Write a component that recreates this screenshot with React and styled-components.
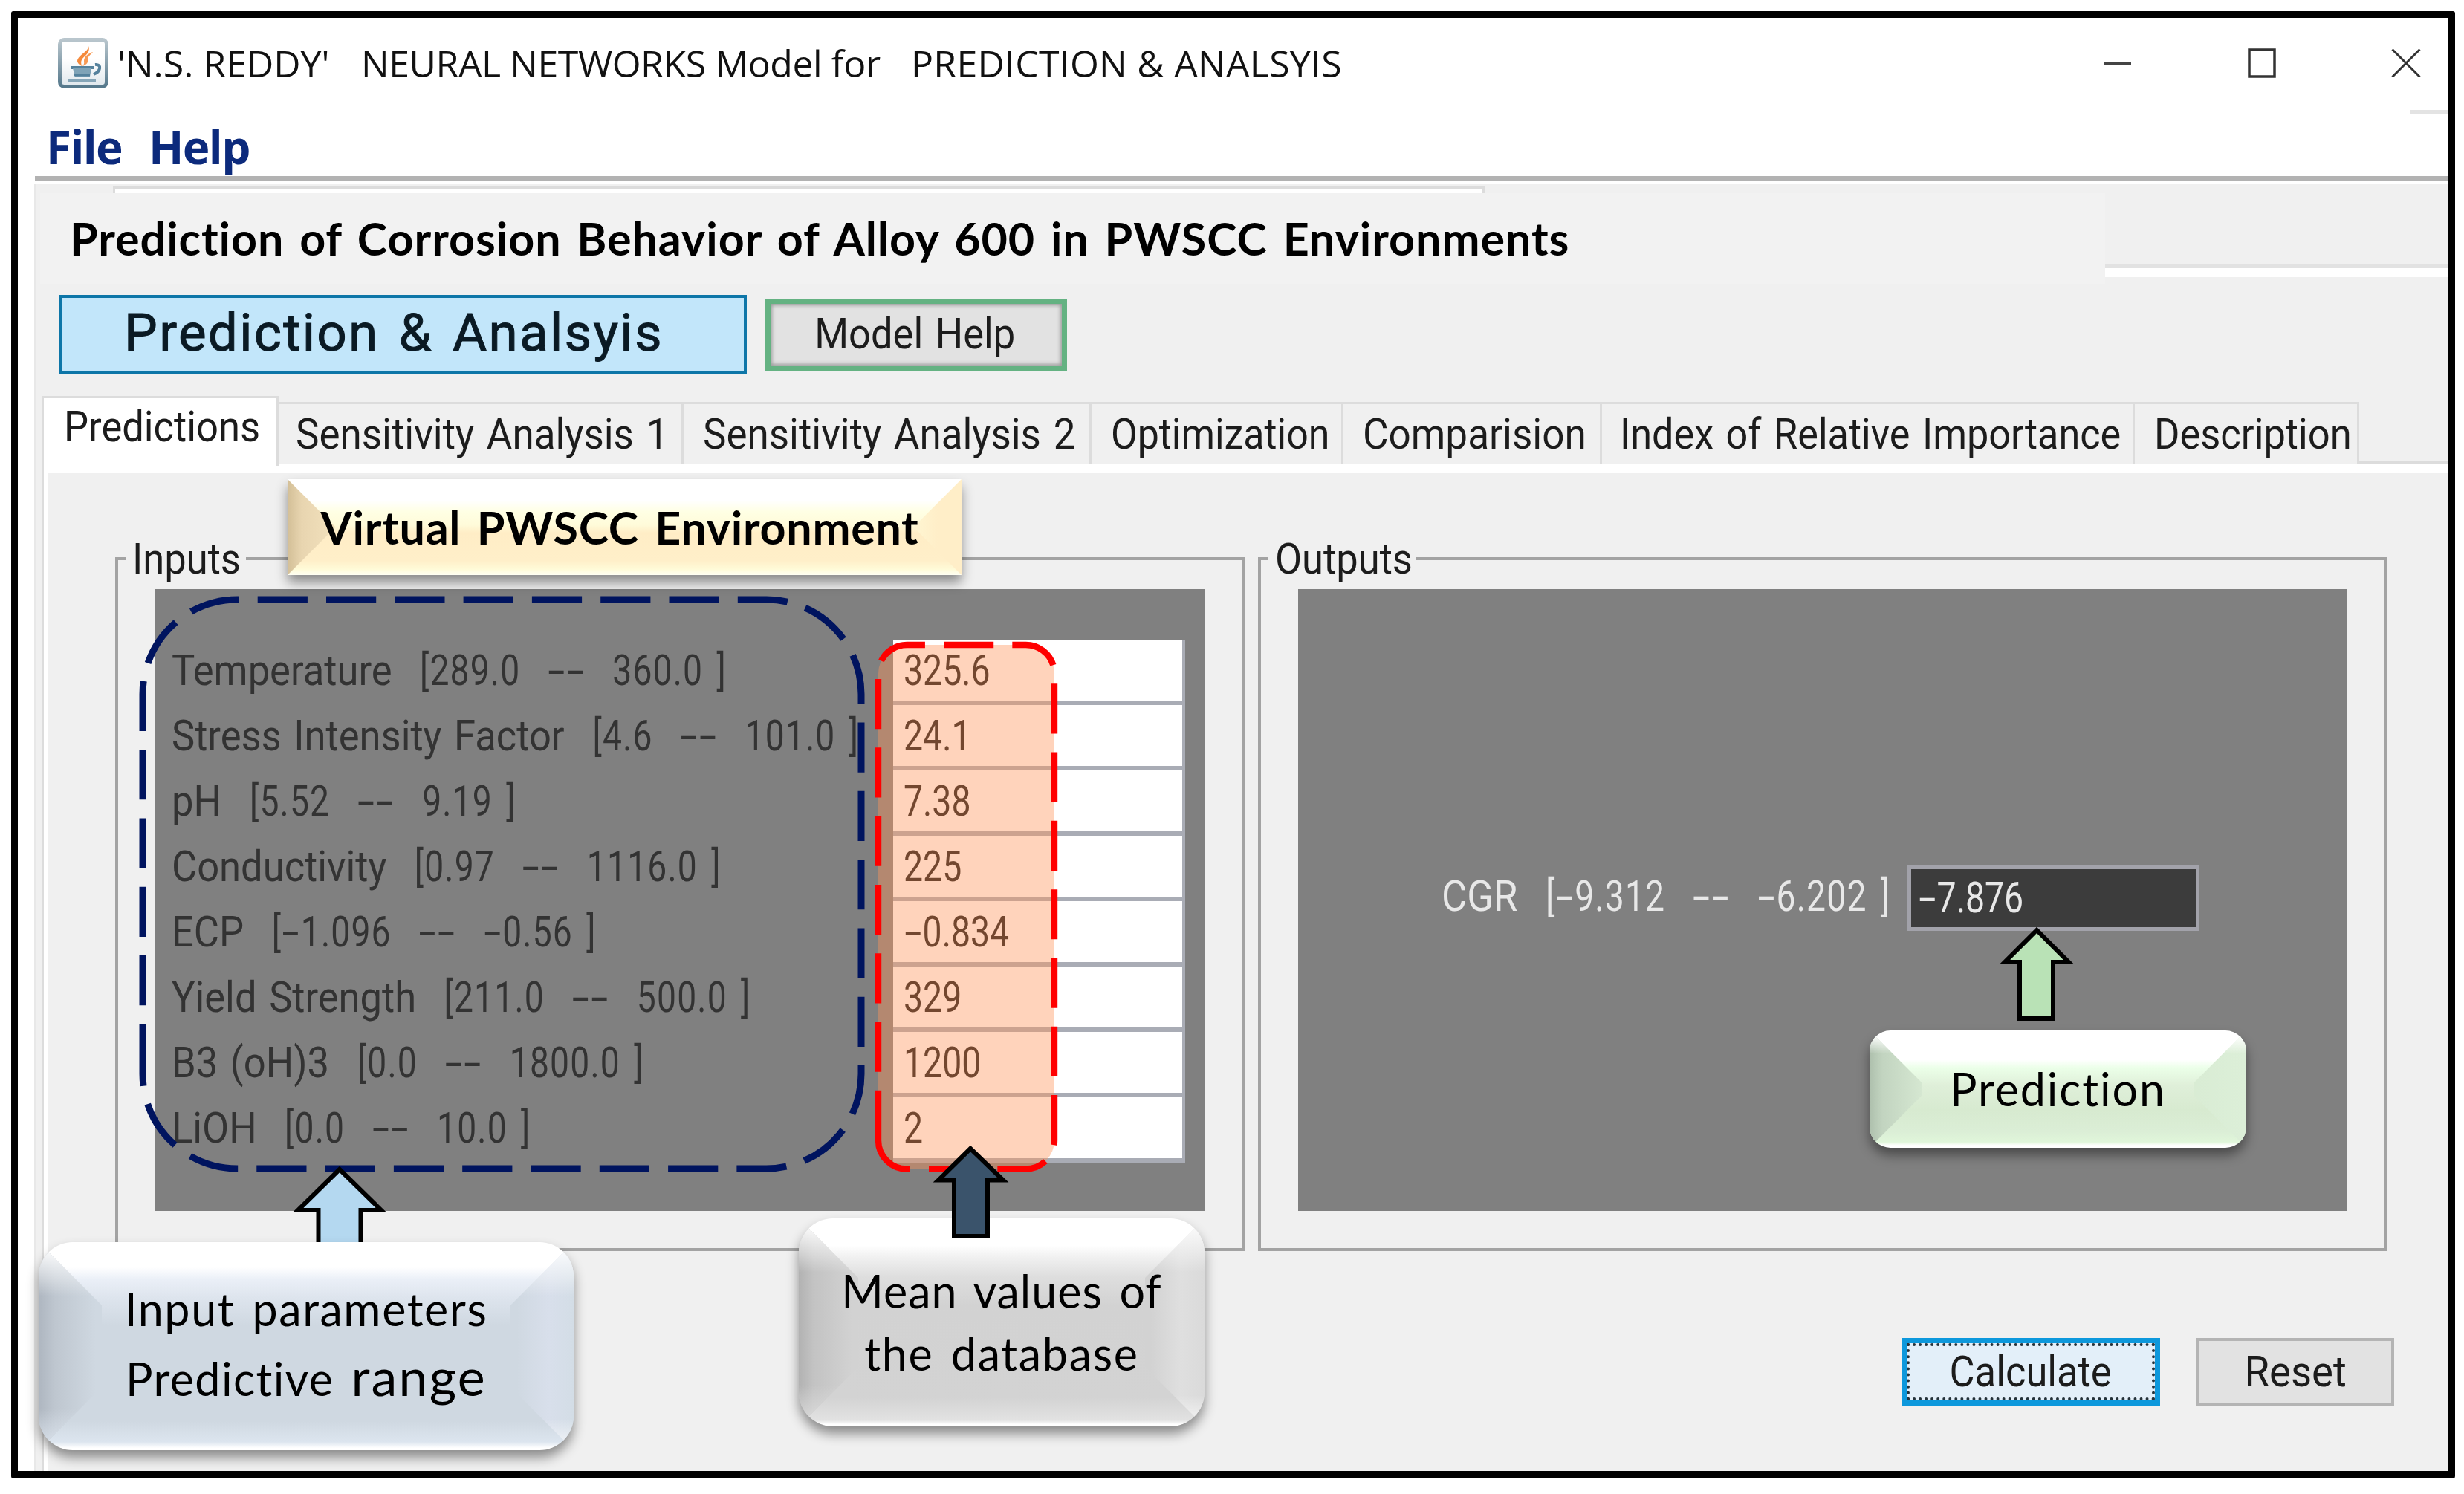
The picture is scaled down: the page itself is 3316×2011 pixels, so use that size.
import React from 'react'
import styled, { createGlobalStyle } from 'styled-components'

const GlobalStyle = createGlobalStyle`
  * {
    box-sizing: border-box;
  }
  body {
    margin: 0;
    background: #fff;
  }
`
const Page = styled.div`
  position: relative;
  width: 3316px;
  height: 2011px;
  padding: 15px 12px 21px 15px;
  overflow: hidden;
`
const Frame = styled.main`
  display: flex;
  flex-direction: column;
  height: 1975px;
  border: 9px solid #000;
  border-bottom-width: 10px;
  border-radius: 3px;
  background: #fff;
`

/* title bar */
const TitleBar = styled.header`
  display: flex;
  align-items: center;
  height: 121px;
  padding: 0 37px 0 54px;
`
const Title = styled.h1`
  display: flex;
  margin: 0 auto 0 12px;
  color: #111;
  font: 400 50px/60px 'Open Sans', sans-serif;
  white-space: pre;
`
const TitlePart = styled.span`
  width: ${(props) => props.$width}px;
  letter-spacing: ${(props) => props.$spacing || 0}px;
`
const Controls = styled.div`
  display: flex;
  gap: 154px;
`
const Sliver = styled.div`
  width: 52px;
  height: 6px;
  margin: 3px 0 0 auto;
  background: #e3e3e3;
`
const MenuBar = styled.nav`
  display: flex;
  height: 83px;
  margin-left: 23px;
  padding: 4px 0 0 15px;
  color: #0c2a7c;
  font: 700 62px/79px 'Open Sans', sans-serif;
  letter-spacing: -1.6px;
`
const MenuItem = styled.span`
  width: 138px;
`
const Rule = styled.div`
  height: 6px;
  margin: 0 0 5px 23px;
  background: #b2b2b2;
`

/* window body */
const Body = styled.section`
  flex: 1;
  margin-left: 22px;
  padding-top: 2px;
  border-left: 3px solid #e8e8e8;
  background: #f0f0f0;
`
const HiddenField = styled.div`
  width: 1846px;
  height: 10px;
  margin-left: 103px;
  border: solid #dcdcdc;
  border-width: 4px 3px 0;
  background: #fff;
`
const HeadingRow = styled.div`
  display: flex;
  height: 122px;
  margin-left: 5px;
`
const Heading = styled.h2`
  width: 2779px;
  margin: 0;
  padding-left: 40px;
  background: #f2f2f2;
  color: #000;
  font: 700 61px/122px Lato, sans-serif;
  letter-spacing: 0.95px;
  word-spacing: 5px;
`
const HiddenPane = styled.div`
  flex: 1;
  height: 18px;
  margin-top: 95px;
  border-top: 6px solid #e2e2e2;
  background: #fff;
`
const Toolbar = styled.div`
  display: flex;
  gap: 25px;
  padding: 15px 0 30px 30px;
`
const ModeButton = styled.button`
  width: 926px;
  height: 106px;
  padding: 0 24px 4px 0;
  border: 4px solid #0d76a8;
  background: #c2e6fa;
  color: #0a1a24;
  font: 400 71px/90px Roboto, sans-serif;
  letter-spacing: 2.3px;
  word-spacing: 6px;
  -webkit-text-stroke: 1px #0a1a24;
`
const HelpButton = styled.button`
  width: 406px;
  height: 97px;
  margin-top: 5px;
  padding: 0 4px 4px 0;
  border: 7px solid #64b282;
  background: #e2e2e2;
  box-shadow: inset 0 0 5px 2px #9a9a9a;
`
const Text = styled.span`
  display: inline-block;
  color: ${(props) => props.$color || '#1c1c1c'};
  font: 400 58px/60px Roboto, sans-serif;
  white-space: pre;
  word-spacing: 4px;
  transform: scaleX(${(props) => props.$scale || 0.905});
  transform-origin: ${(props) => props.$origin || 'left'};
`

const Tabs = styled.div`
  display: flex;
  align-items: flex-end;
  height: 91px;
  margin: 0 0 -3px 7px;
`
const Tab = styled.div`
  position: relative;
  width: ${(props) => props.$width}px;
  height: ${(props) => (props.$selected ? 94 : 83)}px;
  margin-bottom: ${(props) => (props.$selected ? -3 : 0)}px;
  padding: ${(props) => (props.$selected ? 8 : 10)}px 0 0 ${(props) => props.$pad}px;
  border: solid #dcdcdc;
  border-width: 3px 3px 0 ${(props) => (props.$selected ? 3 : 0)}px;
  background: ${(props) => (props.$selected ? '#fff' : '#f0f0f0')};
`
const TabPane = styled.div`
  height: 1359px;
  margin-left: 7px;
  padding: 13px 0 0 6px;
  border: solid #dcdcdc;
  border-width: 3px 0 0 3px;
  background: #fff;
`
const PaneContent = styled.div`
  height: 100%;
  padding: 85px 73px 0 90px;
  background: #f0f0f0;
`
const Groups = styled.div`
  display: flex;
  gap: 18px;
`
const Group = styled.fieldset`
  width: ${(props) => props.$width}px;
  height: 962px;
  min-width: 0;
  margin: 0;
  padding: 11px 0 0 50px;
  border: 4px solid #a3a3a3;
  flex-shrink: 0;
`
const Legend = styled.legend`
  width: ${(props) => props.$width}px;
  height: 60px;
  margin-left: -40px;
  padding: 0 0 0 9px;
`
const Panel = styled.div`
  display: flex;
  flex-direction: column;
  width: ${(props) => props.$width}px;
  height: 837px;
  background: #808080;
`
const InputPanel = styled(Panel)`
  padding: 68px 0 0 22px;
`
const OutputPanel = styled(Panel)`
  padding: 372px 0 0 193px;
`
const Row = styled.div`
  display: flex;
  height: 88px;
`
const Label = styled.div`
  width: ${(props) => props.$width}px;
  padding-top: 11px;
`
const Range = styled.span`
  display: inline-block;
  margin-left: 5px;
  letter-spacing: 1.5px;
  word-spacing: 7px;
  transform: scaleX(0.88);
  transform-origin: left;
`
const Dash = styled.span`
  display: inline-block;
  width: 32px;
  text-align: center;
  transform: scaleX(1.8);
`
const Field = styled.div`
  width: 393px;
  height: 88px;
  padding: 11px 0 0 14px;
  border: solid #a9acb5;
  border-width: 0 4px 6px 0;
  background: #fff;
`
const ResultField = styled.div`
  width: 393px;
  height: 88px;
  padding: 8px 0 0 9px;
  border: 5px solid #a2a2aa;
  background: #3c3c3c;
`
const Actions = styled.div`
  display: flex;
  justify-content: flex-end;
  gap: 49px;
  margin-top: 117px;
`
const ActionButton = styled.button`
  position: relative;
  width: ${(props) => props.$width}px;
  height: 91px;
  padding: 0 0 2px;
  border: 4px solid #b4b4b4;
  background: #e2e2e2;
`
const PrimaryButton = styled(ActionButton)`
  border: 7px solid #0d98dc;
  background: #e3eff9;

  &::after {
    content: '';
    position: absolute;
    inset: 0;
    border: 4px dotted #25323a;
  }
`

/* annotations drawn over the window */
const Overlay = styled.svg`
  position: absolute;
  inset: 0;
`
const Shadow = styled.div`
  position: absolute;
  inset: 0;
  filter: drop-shadow(0 10px 8px rgba(0, 0, 0, 0.42));
`
const Callout = styled.div`
  position: absolute;
  left: ${(props) => props.$x}px;
  top: ${(props) => props.$y}px;
  display: flex;
  flex-direction: column;
  align-items: center;
  justify-content: center;
  width: ${(props) => props.$w}px;
  height: ${(props) => props.$h}px;
  border-radius: ${(props) => props.$r}px;
  overflow: hidden;
  background: ${(props) => props.$face};

  &::before,
  &::after {
    content: '';
    position: absolute;
    top: 0;
    bottom: 0;
    width: ${(props) => props.$bevel}px;
  }
  &::before {
    left: 0;
    background: ${(props) => props.$left};
    clip-path: polygon(0 0, 100% ${(props) => props.$bevel}px, 100% calc(100% - ${(props) => props.$bevel}px), 0 100%);
  }
  &::after {
    right: 0;
    background: ${(props) => props.$right};
    clip-path: polygon(100% 0, 0 ${(props) => props.$bevel}px, 0 calc(100% - ${(props) => props.$bevel}px), 100% 100%);
  }
`
const Note = styled.span`
  position: relative;
  z-index: 1;
  margin: ${(props) => -(props.$lift || 0)}px 0 ${(props) => props.$lift || 0}px;
  padding: 0 ${(props) => props.$shift || 0}px 0 0;
  color: #000;
  font: ${(props) => (props.$bold ? 700 : 400)} 61px/${(props) => props.$line || 84}px Lato, sans-serif;
  letter-spacing: ${(props) => props.$spacing}px;
  word-spacing: 6px;
  white-space: nowrap;
`
const Larger = styled.span`
  font-size: 70px;
  letter-spacing: 2.2px;
`

const tabs = [
  { name: 'Predictions', width: 319, pad: 27, selected: true },
  { name: 'Sensitivity Analysis 1', width: 545, pad: 23, scale: 0.913 },
  { name: 'Sensitivity Analysis 2', width: 549, pad: 26, scale: 0.913 },
  { name: 'Optimization', width: 339, pad: 26, scale: 0.895 },
  { name: 'Comparision', width: 348, pad: 26, scale: 0.915 },
  { name: 'Index of Relative Importance', width: 717, pad: 24, scale: 0.9 },
  { name: 'Description', width: 302, pad: 26 },
]
const inputs = [
  { name: 'Temperature', range: '[289.0  --  360.0 ]', value: '325.6' },
  { name: 'Stress Intensity Factor', range: '[4.6  --  101.0 ]', value: '24.1' },
  { name: 'pH', range: '[5.52  --  9.19 ]', value: '7.38' },
  { name: 'Conductivity', range: '[0.97  --  1116.0 ]', value: '225' },
  { name: 'ECP', range: '[-1.096  --  -0.56 ]', value: '-0.834' },
  { name: 'Yield Strength', range: '[211.0  --  500.0 ]', value: '329' },
  { name: 'B3 (oH)3', range: '[0.0  --  1800.0 ]', value: '1200' },
  { name: 'LiOH', range: '[0.0  --  10.0 ]', value: '2' },
]

// the hyphen is as wide as a digit in this UI font
function Digits({ children }) {
  return children
    .split(/(-)/)
    .map((part, i) => (part === '-' ? <Dash key={i}>-</Dash> : part))
}

function RangeLabel({ name, range, color }) {
  return (
    <Text $color={color}>
      {name + '  '}
      <Range>
        <Digits>{range}</Digits>
      </Range>
    </Text>
  )
}

function JavaIcon() {
  return (
    <svg width='68' height='68' viewBox='0 0 68 68' fill='none'>
      <defs>
        <linearGradient id='edge' x1='0' y1='0' x2='0' y2='1'>
          <stop offset='0' stopColor='#b9c6cd' />
          <stop offset='1' stopColor='#56798c' />
        </linearGradient>
        <linearGradient id='paper' x1='0' y1='0' x2='0' y2='1'>
          <stop offset='0.4' stopColor='#fff' />
          <stop offset='1' stopColor='#dfe7ec' />
        </linearGradient>
      </defs>
      <rect x='2.5' y='2.5' width='63' height='63' rx='6' fill='url(#paper)' stroke='url(#edge)' strokeWidth='5' />
      <path d='M41 11c1 7-14 12-15 20 0 3 3 5 6 7-2-7 0-10 5-14 4-4 6-8 4-13z' fill='#f58a3c' />
      <path d='M47 19c-6 2-12 6-12 12 0 2 1 4-2 7 6-2 8-5 7-9 0-4 4-6 7-10z' fill='#f79a55' />
      <path d='M17 40h32' stroke='#54819c' strokeWidth='4' />
      <path d='M50 36c9-1 8 9-2 13' stroke='#54819c' strokeWidth='4' />
      <path d='M20 41h25l-2 11H23z' fill='#7fa3b7' />
      <path d='M22 50h21' stroke='#54819c' strokeWidth='3' />
      <path d='M14 58h37' stroke='#86a6b8' strokeWidth='4' />
    </svg>
  )
}

function WindowControls() {
  return (
    <Controls>
      <svg width='40' height='40' viewBox='0 0 40 40' fill='none' stroke='#444' strokeWidth='4'>
        <path d='M2 20h36' />
      </svg>
      <svg width='40' height='40' viewBox='0 0 40 40' fill='none' stroke='#333' strokeWidth='3.5'>
        <rect x='3' y='2' width='34' height='36' />
      </svg>
      <svg width='40' height='40' viewBox='0 0 40 40' fill='none' stroke='#333' strokeWidth='3'>
        <path d='M1.500 1.500L38.500 38.500M38.500 1.500L1.500 38.500' />
      </svg>
    </Controls>
  )
}

// starts at the bottom of the left side and runs clockwise
const roundedBox = (x1, y1, x2, y2, r) =>
  `M${x1} ${y2 - r}V${y1 + r}A${r} ${r} 0 0 1 ${x1 + r} ${y1}H${x2 - r}A${r} ${r} 0 0 1 ${x2} ${y1 + r}V${y2 - r}A${r} ${r} 0 0 1 ${x2 - r} ${y2}H${x1 + r}A${r} ${r} 0 0 1 ${x1} ${y2 - r}Z`

function Annotations() {
  return (
    <>
      <Overlay width='3316' height='2011' viewBox='0 0 3316 2011' fill='none'>
        <path d={roundedBox(192, 807, 1159, 1573, 127.5)} stroke='#00145f' strokeWidth='9' strokeDasharray='67.2 25.1' />
        <path d={roundedBox(1182, 868, 1419, 1573.5, 38.5)} fill='rgba(255, 148, 90, 0.41)' stroke='#f00' strokeWidth='8.4' strokeDasharray='67.2 25.1' />
        <path d='M457 1574L401 1629H428.500V1680H485.500V1629H513Z' fill='#b4d8f0' stroke='#000' strokeWidth='6' />
        <path d='M2741 1252L2698 1295H2718V1371H2763V1295H2784Z' fill='#b9e2b6' stroke='#000' strokeWidth='6' />
      </Overlay>
      <Shadow>
        <Callout
          $x={387}
          $y={645}
          $w={907}
          $h={129}
          $r={0}
          $bevel={64}
          $face='linear-gradient(#fff 22%, #ffffe4 34%, #fffbd9 48%, #ffedc6 56%, #ffefc9 85%, #fffbd8 94%, #fffff4 100%)'
          $left='linear-gradient(90deg, #d3bf97, #e8d5b0 30%, #f3e2bd)'
          $right='linear-gradient(90deg, #fff6d2, #ffeec8 50%)'
        >
          <Note $bold $spacing={0.7} $shift={13}>Virtual PWSCC Environment</Note>
        </Callout>
      </Shadow>
      <Shadow>
        <Callout
          $x={52}
          $y={1672}
          $w={720}
          $h={280}
          $r={46}
          $bevel={85}
          $face='linear-gradient(#fff 12%, #eaeff7 18%, #dde4ed 27%, #cfd8e1 40%, #cfd8e1 86%, #dce5ef 96%, #fff 99%)'
          $left='linear-gradient(rgba(255,255,255,.85) 6%, transparent 26%, transparent 80%, rgba(225,233,242,.9)), linear-gradient(90deg, #aeb6c0, #bec6cf 25%, #cfd8e1 90%)'
          $right='linear-gradient(rgba(255,255,255,.8) 6%, transparent 26%, transparent 85%, rgba(255,255,255,.8)), linear-gradient(90deg, #cfd8e1 10%, #d8dfeb 60%, #d3dde6)'
        >
          <Note $line={95} $spacing={1.6}>Input parameters</Note>
          <Note $line={98} $lift={6} $spacing={1.4}>
            Predictive <Larger>range</Larger>
          </Note>
        </Callout>
      </Shadow>
      <Shadow>
        <Callout
          $x={1075}
          $y={1640}
          $w={546}
          $h={280}
          $r={46}
          $bevel={80}
          $face='linear-gradient(#fff 13%, #f2f2f2 18%, #dedede 28%, #d2d2d2 42%, #d3d3d3 86%, #e2e2e2 97%, #fff 99%)'
          $left='linear-gradient(rgba(255,255,255,.85) 6%, transparent 26%, transparent 80%, rgba(225,225,225,.9)), linear-gradient(90deg, #b2b2b2, #c3c3c3 25%, #d2d2d2 90%)'
          $right='linear-gradient(rgba(255,255,255,.8) 6%, transparent 26%, transparent 85%, rgba(255,255,255,.8)), linear-gradient(90deg, #d2d2d2 10%, #dfdfdf 60%, #dadada)'
        >
          <Note $spacing={1} $shift={-5}>Mean values of</Note>
          <Note $spacing={1.7}>the database</Note>
        </Callout>
      </Shadow>
      <Shadow>
        <Callout
          $x={2516}
          $y={1387}
          $w={507}
          $h={158}
          $r={28}
          $bevel={70}
          $face='linear-gradient(#fff 25%, #ebffe8 32%, #dfefd9 47%, #d7ead0 68%, #dbeed6 86%, #e0f6da 95%, #fff 98%)'
          $left='linear-gradient(rgba(255,255,255,.9) 6%, transparent 20%), linear-gradient(90deg, #aec0ad, #c2d4c0 25%, #d5e7d1)'
          $right='linear-gradient(rgba(255,255,255,.9) 6%, transparent 20%), linear-gradient(90deg, #d9ecd4, #dcefd8)'
        >
          <Note $spacing={1.86}>Prediction</Note>
        </Callout>
      </Shadow>
      <Overlay width='3316' height='2011' viewBox='0 0 3316 2011' fill='none'>
        <path d='M1306 1546L1263 1588.500H1284V1664H1329V1588.500H1350Z' fill='#3a536b' stroke='#000' strokeWidth='6' />
      </Overlay>
    </>
  )
}

function App() {
  return (
    <Page>
      <GlobalStyle />
      <Frame>
        <TitleBar>
          <JavaIcon />
          <Title>
            <TitlePart $width={328}>'N.S. REDDY'</TitlePart>
            <TitlePart $width={740} $spacing={-0.45}>NEURAL NETWORKS Model for</TitlePart>
            <TitlePart $width={600} $spacing={0.25}>PREDICTION & ANALSYIS</TitlePart>
          </Title>
          <WindowControls />
        </TitleBar>
        <Sliver />
        <MenuBar>
          <MenuItem>File</MenuItem>
          <MenuItem>Help</MenuItem>
        </MenuBar>
        <Rule />
        <Body>
          <HiddenField />
          <HeadingRow>
            <Heading>Prediction of Corrosion Behavior of Alloy 600 in PWSCC Environments</Heading>
            <HiddenPane />
          </HeadingRow>
          <Toolbar>
            <ModeButton>Prediction & Analsyis</ModeButton>
            <HelpButton>
              <Text $origin='center'>Model Help</Text>
            </HelpButton>
          </Toolbar>
          <Tabs>
            {tabs.map((tab) => (
              <Tab key={tab.name} $width={tab.width} $pad={tab.pad} $selected={tab.selected}>
                <Text $scale={tab.scale}>{tab.name}</Text>
              </Tab>
            ))}
          </Tabs>
          <TabPane>
            <PaneContent>
              <Groups>
                <Group $width={1520}>
                  <Legend $width={162}>
                    <Text>Inputs</Text>
                  </Legend>
                  <InputPanel $width={1412}>
                    {inputs.map((input) => (
                      <Row key={input.name}>
                        <Label $width={971}>
                          <RangeLabel name={input.name} range={input.range} color='#333' />
                        </Label>
                        <Field>
                          <Text $scale={0.8} $color='#111'>
                            <Digits>{input.value}</Digits>
                          </Text>
                        </Field>
                      </Row>
                    ))}
                  </InputPanel>
                </Group>
                <Group $width={1519}>
                  <Legend $width={198}>
                    <Text>Outputs</Text>
                  </Legend>
                  <OutputPanel $width={1412}>
                    <Row>
                      <Label $width={627}>
                        <RangeLabel name='CGR' range='[-9.312  --  -6.202 ]' color='#e8e8e8' />
                      </Label>
                      <ResultField>
                        <Text $scale={0.8} $color='#e8e8e8'>
                          <Digits>-7.876</Digits>
                        </Text>
                      </ResultField>
                    </Row>
                  </OutputPanel>
                </Group>
              </Groups>
              <Actions>
                <PrimaryButton $width={348}>
                  <Text $origin='center'>Calculate</Text>
                </PrimaryButton>
                <ActionButton $width={266}>
                  <Text $origin='center' $scale={0.94}>Reset</Text>
                </ActionButton>
              </Actions>
            </PaneContent>
          </TabPane>
        </Body>
      </Frame>
      <Annotations />
    </Page>
  )
}

export default App
